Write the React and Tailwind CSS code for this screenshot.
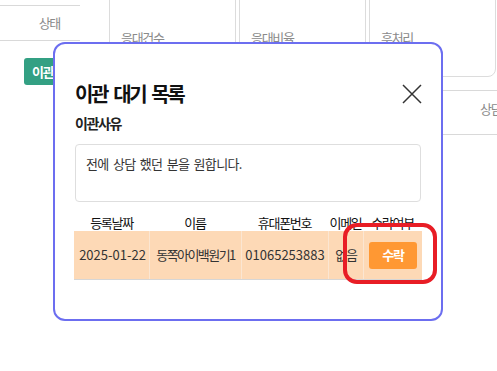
const font = "font-['Noto_Sans_CJK_KR','Noto_Sans',sans-serif]";

function StatCard({ label, last }) {
  return (
    <div
      className={`w-[127px] h-[87px] border border-[#dcdcdc] bg-white pt-[39px] px-[11px] ${
        last ? "rounded-br-[8px]" : ""
      }`}
    >
      <div className="text-[13px] leading-[16px] text-[#8a8a8a] tracking-[-0.1em]">{label}</div>
    </div>
  );
}

function Background() {
  return (
    <div className="flex">
      <div className="w-[80px] shrink-0 pt-[5px]">
        <div className="h-[36px] border-y border-[#d9d9d9] flex items-center justify-end pr-[20px] text-[13px] text-[#8a8a8a] tracking-[-0.1em]">
          상태
        </div>
        <div className="mt-[17px] ml-[24px] inline-flex h-[27px] items-center whitespace-nowrap rounded-[3px] bg-[#33a083] px-[8px] text-[13px] font-bold text-white tracking-[-0.1em]">
          이관요청
        </div>
      </div>
      <div className="ml-[29px] flex-1">
        <div className="-mt-[10px] flex gap-[3px]">
          <StatCard label="응대건수" />
          <StatCard label="응대비율" />
          <StatCard label="후처리" last />
        </div>
        <div className="mt-[13px] h-[45px] border-y border-[#d9d9d9] pl-[371px] pt-[8px] overflow-hidden whitespace-nowrap text-[13px] text-[#8a8a8a] tracking-[-0.1em]">
          상담
        </div>
      </div>
    </div>
  );
}

export default function App() {
  return (
    <div className={`relative w-[497px] h-[371px] overflow-hidden bg-white ${font}`}>
      <Background />

      <div className="absolute left-[53px] top-[42px] w-[390px] h-[279px] rounded-[12px] border-2 border-[#6c6ef0] bg-white px-[20px] pt-[36px]">
        <div className="flex h-[28px] items-center justify-between">
          <h2 className="text-[20px] font-bold leading-[28px] text-[#111] tracking-[-0.12em] [word-spacing:4px]">
            이관 대기 목록
          </h2>
          <svg width="20" height="20" viewBox="0 0 20 20" className="-mr-[1px]">
            <path d="M1 1L19 19M19 1L1 19" stroke="#333" strokeWidth="1.5" fill="none" />
          </svg>
        </div>

        <div className="mt-[5px] text-[14px] font-bold leading-[20px] text-[#222] tracking-[-0.1em]">이관사유</div>

        <div className="mt-[11px] h-[58px] rounded-[4px] border border-[#dedede] px-[10px] pt-[9px] text-[13px] leading-[20px] text-[#333] tracking-[-0.05em] [word-spacing:2px]">
          전에 상담 했던 분을 원합니다.
        </div>

        <div className="-mx-[1px] mt-[12px]">
          <div className="grid h-[17px] grid-cols-[75px_92px_87px_35px_59px] items-center text-center text-[13px] leading-[17px] text-[#111] tracking-[-0.1em] whitespace-nowrap">
            <div>등록날짜</div>
            <div>이름</div>
            <div>휴대폰번호</div>
            <div>이메일</div>
            <div>수락여부</div>
          </div>
          <div className="grid h-[49px] grid-cols-[75px_92px_87px_35px_59px] items-stretch border-b border-[#d6d6d6] bg-[#fdd9b6] text-center text-[13px] text-[#333] whitespace-nowrap">
            <div className="flex items-center justify-center pl-[2px]">2025-01-22</div>
            <div className="flex items-center justify-center border-l border-[#fbe6d2] tracking-[-0.12em]">동쪽아이백원기1</div>
            <div className="flex items-center justify-center border-l border-[#fbe6d2]">01065253883</div>
            <div className="flex items-center justify-center border-l border-[#fbe6d2] tracking-[-0.1em]">없음</div>
            <div className="flex items-center justify-center border-l border-[#fbe6d2]">
              <button className="h-[27px] w-[48px] rounded-[3px] bg-[#ff9833] text-[13px] font-bold text-white tracking-[-0.1em]">
                수락
              </button>
            </div>
          </div>
        </div>
      </div>

      <div className="absolute left-[343px] top-[223px] w-[94px] h-[61px] rounded-[14px] border-[4px] border-[#e81d25]" />
    </div>
  );
}
